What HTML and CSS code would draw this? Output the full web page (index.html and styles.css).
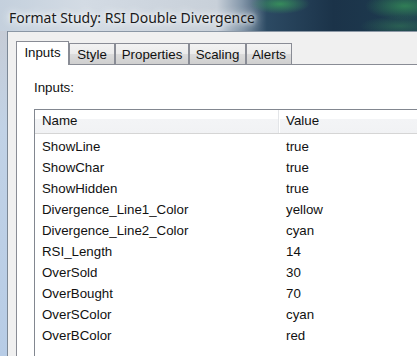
FILE: index.html
```html
<!DOCTYPE html>
<html lang="en">
<head>
  <meta charset="UTF-8">
  <title>Format Study: RSI Double Divergence</title>
  <link rel="stylesheet" href="styles.css">
</head>
<body>

  <div class="titlebar">
    <span class="title">Format Study: RSI Double Divergence</span>
  </div>

  <div class="frame">
    <div class="frame-edge"></div>
    <div class="client">

      <div class="tabs">
        <div class="tab active" style="width: 53px">Inputs</div>
        <div class="tab" style="width: 46px">Style</div>
        <div class="tab" style="width: 74px">Properties</div>
        <div class="tab" style="width: 57px">Scaling</div>
        <div class="tab" style="width: 46px">Alerts</div>
      </div>

      <div class="panel">
        <p class="label">Inputs:</p>

        <div class="listbox">
          <div class="list-head">
            <div class="col-name">Name</div>
            <div class="col-value">Value</div>
          </div>
          <div class="list-body">
            <div class="row"><div class="col-name">ShowLine</div><div class="col-value">true</div></div>
            <div class="row"><div class="col-name">ShowChar</div><div class="col-value">true</div></div>
            <div class="row"><div class="col-name">ShowHidden</div><div class="col-value">true</div></div>
            <div class="row"><div class="col-name">Divergence_Line1_Color</div><div class="col-value">yellow</div></div>
            <div class="row"><div class="col-name">Divergence_Line2_Color</div><div class="col-value">cyan</div></div>
            <div class="row"><div class="col-name">RSI_Length</div><div class="col-value">14</div></div>
            <div class="row"><div class="col-name">OverSold</div><div class="col-value">30</div></div>
            <div class="row"><div class="col-name">OverBought</div><div class="col-value">70</div></div>
            <div class="row"><div class="col-name">OverSColor</div><div class="col-value">cyan</div></div>
            <div class="row"><div class="col-name">OverBColor</div><div class="col-value">red</div></div>
          </div>
        </div>
      </div>

    </div>
  </div>

</body>
</html>
```

FILE: styles.css
```css
* {
  box-sizing: border-box;
}

html, body {
  margin: 0;
  width: 417px;
  height: 356px;
  overflow: hidden;
}

body {
  font-family: 'Liberation Sans', Arial, sans-serif;
  font-size: 13.3px;
  color: #111;
  background: #f0f0f0;
}

/* barra de titulo estilo aero */
.titlebar {
  height: 31px;
  padding-left: 9px;
  display: flex;
  align-items: center;
  background:
    radial-gradient(ellipse 30px 10px at 280px 4px, rgba(60, 170, 90, 0.7), transparent),
    radial-gradient(ellipse 40px 14px at 405px 6px, rgba(60, 170, 90, 0.6), transparent),
    radial-gradient(ellipse 40px 10px at 400px 26px, rgba(60, 150, 90, 0.4), transparent),
    linear-gradient(90deg, #c4d0dd 0, #d3dbe4 20%, #c8d0d9 52%, #8497aa 58%, #2c4a63 64%, #1b3349 80%, #1e3c50 100%);
}

.title {
  font-family: 'Noto Sans', sans-serif;
  font-size: 14px;
  color: #1a1a1a;
  margin-top: 3px;
  text-shadow: 0 0 8px #f2f4f6, 0 0 12px #e6ebf0, 0 0 4px #fff;
}

.frame {
  display: flex;
  height: 325px;
}

.frame-edge {
  width: 8px;
  background: linear-gradient(180deg, #c6ccd6 0, #c1d2e6 30%, #b7cce6 100%);
  border-right: 1px solid #7c8896;
}

.client {
  flex: 1;
  border-top: 1px solid #8b97a5;
  background: #f0f0f0;
  padding: 9px 0 0 8px;
}

.tabs {
  display: flex;
  align-items: flex-end;
  height: 23px;
  position: relative;
  z-index: 1;
}

.tab {
  height: 21px;
  border: 1px solid #898c95;
  border-bottom: none;
  background: linear-gradient(180deg, #f2f2f2 0, #ebebeb 50%, #dcdcdc 51%, #cfcfcf 100%);
  text-align: center;
  line-height: 21px;
  color: #111;
}

.tab.active {
  height: 24px;
  margin-bottom: -1px;
  background: #fff;
  line-height: 22px;
}

.panel {
  background: #fff;
  border-top: 1px solid #898c95;
  border-left: 1px solid #898c95;
  height: 300px;
  padding: 14px 0 0 17px;
}

.label {
  margin: 0 0 13px 0;
  line-height: 17px;
}

.listbox {
  border: 1px solid #828790;
  border-right: none;
  background: #fff;
  height: 260px;
}

.list-head {
  display: flex;
  height: 24px;
  border-bottom: 1px solid #d5d5d5;
  background: linear-gradient(180deg, #fff 0, #fff 40%, #f3f4f6 41%, #f1f2f4 100%);
  line-height: 22px;
}

.list-head .col-name {
  border-right: 1px solid #e3e5e8;
  box-shadow: 1px 0 0 #fff;
}

.col-name {
  width: 244px;
  padding-left: 7px;
}

.col-value {
  padding-left: 7px;
}

.list-body {
  padding-top: 2px;
}

.row {
  display: flex;
  height: 21px;
  line-height: 21px;
}
```
